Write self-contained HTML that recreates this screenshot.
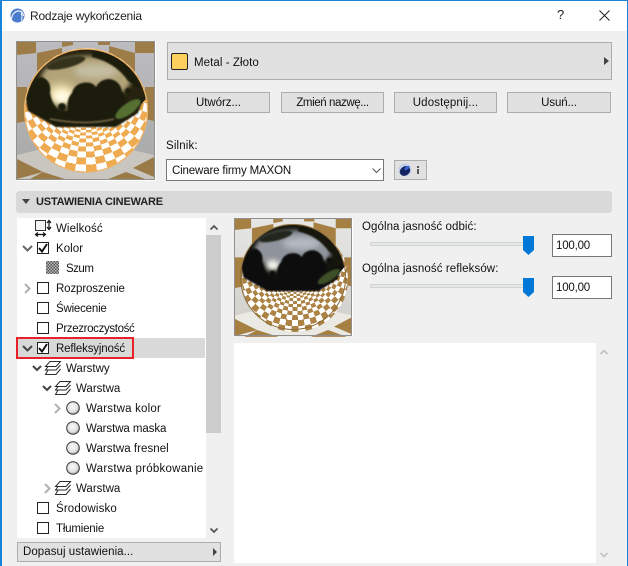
<!DOCTYPE html>
<html lang="pl"><head><meta charset="utf-8"><title>Rodzaje wykończenia</title>
<style>
html,body{margin:0;padding:0}
body{width:628px;height:566px;overflow:hidden;position:relative;background:#f0f0f0;font:11.5px "Liberation Sans",sans-serif;color:#111}
.a,.t,.b{position:absolute}
.t{line-height:20px;white-space:nowrap;margin-top:1px}
.b{box-sizing:border-box;background:#e1e1e1;border:1px solid #adadad;text-align:center;line-height:20px;white-space:nowrap}
.cb{position:absolute;box-sizing:border-box;width:12px;height:12px;border:1px solid #222;background:#fff;left:37px}
svg{position:absolute;overflow:visible}
.floor{position:absolute;overflow:hidden;border-radius:50%;isolation:isolate;clip-path:circle(50%)}
.floor div{position:absolute;inset:0}
</style></head><body>
<svg width="0" height="0" style="position:absolute"><defs>
<symbol id="stack" viewBox="0 0 16 14" overflow="visible"><g fill="none" stroke="#2b2b2b" stroke-width="1"><path d="M5 .5H15.500L11 5.500H.5Z"/><path d="M3 5.500L.5 9H11L15.500 4"/><path d="M3 9L.5 13.500H11L15.500 8"/></g></symbol>
<radialGradient id="ballg" cx=".45" cy=".4" r=".7"><stop offset="0" stop-color="#fafafa"/><stop offset=".6" stop-color="#e0e0e0"/><stop offset=".85" stop-color="#9a9a9a"/><stop offset="1" stop-color="#666"/></radialGradient>
<symbol id="ball" viewBox="0 0 14 14" overflow="visible"><circle cx="7" cy="7" r="6.300" fill="url(#ballg)" stroke="#333" stroke-width="1"/></symbol>
<filter id="f05" x="-30%" y="-30%" width="160%" height="160%"><feGaussianBlur stdDeviation=".8"/></filter>
<filter id="f2" x="-50%" y="-50%" width="200%" height="200%"><feGaussianBlur stdDeviation="2.500"/></filter>
<filter id="f3" x="-50%" y="-50%" width="200%" height="200%"><feGaussianBlur stdDeviation="3"/></filter>
<filter id="f5" x="-80%" y="-80%" width="260%" height="260%"><feGaussianBlur stdDeviation="5"/></filter>
<clipPath id="up1"><circle cx="70" cy="69.500" r="61.500"/></clipPath>
<linearGradient id="wall1" x1="0" x2="0" y1="0" y2="1"><stop offset="0" stop-color="#bcbcbf"/><stop offset="1" stop-color="#a8a7a7"/></linearGradient>
<linearGradient id="wall2" x1="0" x2="0" y1="0" y2="1"><stop offset="0" stop-color="#e6e6e4"/><stop offset="1" stop-color="#cfcec9"/></linearGradient>
<symbol id="tree" viewBox="0 0 139 139" overflow="visible"><g filter="url(#f05)">
<path d="M10 60Q14 38 26 36Q36 40 34 52Q36 64 44 70L100 70Q108 62 114 60L128 56L122 72L100 86H40L12 70Z"/>
<path d="M52 70Q50 58 56 52Q58 44 66 42Q76 40 80 46Q84 38 94 38Q104 40 106 50Q112 56 108 72Z"/>
<circle cx="46" cy="66" r="4"/><circle cx="112" cy="50" r="3"/>
</g></symbol>
</defs></svg>

<!-- window chrome -->
<div class="a" style="left:0;top:0;width:628px;height:31px;background:#fff"></div>
<div class="a" style="left:0;top:0;width:628px;height:1px;background:#1883d7"></div>
<div class="a" style="left:0;top:0;width:2px;height:566px;background:#1883d7"></div>
<div class="a" style="left:627px;top:0;width:1px;height:566px;background:#1883d7"></div>
<svg style="left:10px;top:8px" width="15" height="15" viewBox="0 0 15 15"><circle cx="7.500" cy="7.500" r="7" fill="#4a7ccb"/><path d="M1.500 11C2 6 5 3 9 3c2.500 0 4 2 4.500 5" fill="none" stroke="#f2f5fc" stroke-width="1.200"/><path d="M11 5c1.200 2 1.200 5 .3 7.500" fill="none" stroke="#fff" stroke-width="1"/></svg>
<div class="t" style="left:30px;top:5px;font-size:12px;letter-spacing:-.22px;color:#222">Rodzaje wykończenia</div>
<div class="t" style="left:557px;top:4px;font-size:13px;color:#222">?</div>
<svg style="left:599px;top:10px" width="11" height="11" viewBox="0 0 11 11"><path d="M.5 .5L10.500 10.500M10.500 .5L.5 10.500" stroke="#222" stroke-width="1" fill="none"/></svg>

<!-- big preview -->
<div class="a" style="left:16px;top:41px;width:140px;height:140px;background:#fff"></div>
<svg style="left:16px;top:41px" width="139" height="139" viewBox="0 0 139 139">
<rect width="139" height="139" fill="url(#wall1)"/>
<g fill="#9d7c47"><path d="M1 1H20V12L1 14Z"/><path d="M21 12L46 7V25L21 31Z"/><path d="M46 1H57V4L46 6Z"/><path d="M82 1H94V4H82Z"/><path d="M93 5L119 12V33L93 25Z"/><path d="M119 1H138V12H119Z"/><path d="M1 46L11 46V80L1 82Z"/><path d="M129 46L138 46V80L129 78Z"/></g>
<path d="M1 114L34 106H104L138 114V139H1Z" fill="#c9c6c0"/>
<g fill="#9a7b48"><path d="M1 118L27 131L1 138Z"/><path d="M27 131L52 139H12Z"/><path d="M138 116L117 127L138 136Z"/><path d="M110 131L90 139H132Z"/></g>
<rect x=".5" y=".5" width="138" height="138" fill="none" stroke="#8f8f8f"/>
</svg>
<div class="floor" style="left:24px;top:48px;width:124px;height:124px;background:repeating-conic-gradient(from 4deg at 50% 36%,#000 0 8deg,#fff 8deg 16deg)">
<div style="background:radial-gradient(circle at 50% 36%,#000 0 33px,#fff 33px 35px,#000 35px 37.500px,#fff 37.500px 40px,#000 40px 43px,#fff 43px 46px,#000 46px 50px,#fff 50px 54px,#000 54px 59px,#fff 59px 65px,#000 65px 72px,#fff 72px 80px,#000 80px 90px);mix-blend-mode:difference"></div>
<div style="background:#efab52;mix-blend-mode:screen"></div>
</div>
<svg style="left:16px;top:41px" width="139" height="139" viewBox="0 0 139 139">
<g clip-path="url(#up1)">
<ellipse cx="70" cy="30" rx="70" ry="54" fill="#272310"/>
<ellipse cx="70" cy="38" rx="45" ry="23" fill="#b2a379" filter="url(#f2)"/>
<ellipse cx="80" cy="30" rx="22" ry="7" fill="#c4bda2" filter="url(#f3)"/>
<ellipse cx="45" cy="55" rx="15" ry="11" fill="#fff0bb" filter="url(#f5)"/>
<ellipse cx="46" cy="56" rx="8" ry="6" fill="#fffbe6" filter="url(#f3)"/>
<ellipse cx="50" cy="22" rx="20" ry="5" transform="rotate(-14 50 22)" fill="#34331c" filter="url(#f05)"/>
<path d="M76 9Q115 12 125 48L112 40Q100 22 76 16Z" fill="#1f1d0d" filter="url(#f05)"/>
<use href="#tree" width="139" height="139" fill="#1d1e0e"/>
<ellipse cx="112" cy="68" rx="15" ry="5.500" transform="rotate(-36 112 68)" fill="#566f30" filter="url(#f05)"/>
<path d="M34 78Q70 85 98 78" fill="none" stroke="#7a6c48" stroke-width="1.600" filter="url(#f05)"/>
</g>
<circle cx="70" cy="69.500" r="61.500" fill="none" stroke="#efb163" stroke-width="1.200"/>
</svg>

<!-- material selector -->
<div class="b" style="left:167px;top:42px;width:445px;height:38px"></div>
<div class="a" style="left:171px;top:53px;width:17px;height:17px;box-sizing:border-box;background:#fdd05e;border:1px solid #222;border-radius:2px"></div>
<div class="t" style="left:194px;top:52px;letter-spacing:.07px">Metal - Złoto</div>
<div class="a" style="left:604px;top:57px;border-left:5px solid #444;border-top:4px solid transparent;border-bottom:4px solid transparent"></div>
<div class="b" style="left:167px;top:92px;width:103px;height:21px;line-height:21px;letter-spacing:-.05px">Utwórz...</div>
<div class="b" style="left:281px;top:92px;width:103px;height:21px;line-height:21px;letter-spacing:-.4px">Zmień nazwę...</div>
<div class="b" style="left:394px;top:92px;width:103px;height:21px;line-height:21px;letter-spacing:.12px">Udostępnij...</div>
<div class="b" style="left:507px;top:92px;width:104px;height:21px;line-height:21px;letter-spacing:-.1px">Usuń...</div>
<div class="t" style="left:166px;top:135px;letter-spacing:.15px">Silnik:</div>
<div class="a" style="left:166px;top:159px;width:218px;height:22px;box-sizing:border-box;background:#fff;border:1px solid #777"></div>
<div class="t" style="left:172px;top:160px;letter-spacing:-.15px">Cineware firmy MAXON</div>
<svg style="left:372px;top:168px" width="9" height="5" viewBox="0 0 9 5"><path d="M.5 .5L4.500 4.500L8.500 .5" fill="none" stroke="#555"/></svg>
<div class="b" style="left:394px;top:160px;width:33px;height:20px"></div>
<svg style="left:398px;top:163px" width="15" height="14" viewBox="0 0 15 14"><circle cx="7" cy="7" r="6.500" fill="#c4cfec"/><ellipse cx="7" cy="8" rx="5.500" ry="4.500" transform="rotate(-35 7 8)" fill="#14245e"/><ellipse cx="9" cy="5" rx="3" ry="1.500" transform="rotate(-35 9 5)" fill="#3a62d0"/></svg>
<div class="a" style="left:417px;top:166px;width:2px;height:2px;background:#555"></div>
<div class="a" style="left:417px;top:169px;width:2px;height:5px;background:#555"></div>

<!-- section header -->
<div class="a" style="left:16px;top:191px;width:596px;height:22px;background:#d9d9d9;border-radius:3px"></div>
<div class="a" style="left:22px;top:199px;border-top:5px solid #444;border-left:4px solid transparent;border-right:4px solid transparent"></div>
<div class="t" style="left:36px;top:191px;font-weight:bold;font-size:11px;letter-spacing:-.17px;color:#222">USTAWIENIA CINEWARE</div>

<!-- tree -->
<div class="a" style="left:17px;top:218px;width:189px;height:320px;background:#fff"></div>
<div class="a" style="left:206px;top:235px;width:15px;height:198px;background:#cdcdcd"></div>
<svg style="left:210px;top:225px" width="8" height="5" viewBox="0 0 8 5"><path d="M.5 4.500L4 1L7.500 4.500" fill="none" stroke="#555" stroke-width="1.700"/></svg>
<svg style="left:210px;top:528px" width="8" height="5" viewBox="0 0 8 5"><path d="M.5 .5L4 4L7.500 .5" fill="none" stroke="#555" stroke-width="1.700"/></svg>
<div class="a" style="left:17px;top:338px;width:188px;height:20px;background:#d9d9d9"></div>

<svg style="left:35px;top:220px" width="17" height="17" viewBox="0 0 17 17"><rect x=".5" y=".5" width="10" height="10" fill="#f4f4f4" stroke="#333" stroke-width="1"/><path d="M14 1V9M12 3L14 .5L16 3M12 7L14 9.500L16 7" fill="none" stroke="#111" stroke-width="1.200"/><path d="M1 14.500H10M3 12.500L.5 14.500L3 16.500M8 12.500L10.500 14.500L8 16.500" fill="none" stroke="#111" stroke-width="1.200"/></svg>
<div class="t" style="left:56px;top:218px;letter-spacing:.08px">Wielkość</div>

<svg style="left:22px;top:245px" width="11" height="7" viewBox="0 0 11 7"><path d="M1 1L5.500 5.500L10 1" fill="none" stroke="#666" stroke-width="2"/></svg>
<div class="cb" style="top:242px"></div>
<svg style="left:38px;top:243px" width="10" height="10" viewBox="0 0 10 10"><path d="M1 5L4 8.500L9 1" fill="none" stroke="#111" stroke-width="1.900"/></svg>
<div class="t" style="left:56px;top:238px;letter-spacing:.05px">Kolor</div>

<div class="a" style="left:46px;top:261px;width:13px;height:13px;background:repeating-conic-gradient(#555 0 25%,#bbb 25% 50%) 0 0/3px 3px"></div>
<div class="t" style="left:66px;top:258px;letter-spacing:-.5px">Szum</div>

<svg style="left:24px;top:283px" width="7" height="11" viewBox="0 0 7 11"><path d="M1 1L5.500 5.500L1 10" fill="none" stroke="#b0b0b0" stroke-width="2"/></svg>
<div class="cb" style="top:282px"></div>
<div class="t" style="left:56px;top:278px;letter-spacing:-.13px">Rozproszenie</div>
<div class="cb" style="top:302px"></div>
<div class="t" style="left:56px;top:298px;letter-spacing:-.2px">Świecenie</div>
<div class="cb" style="top:322px"></div>
<div class="t" style="left:56px;top:318px;letter-spacing:-.35px">Przezroczystość</div>

<svg style="left:22px;top:345px" width="11" height="7" viewBox="0 0 11 7"><path d="M1 1L5.500 5.500L10 1" fill="none" stroke="#444" stroke-width="2"/></svg>
<div class="cb" style="top:342px"></div>
<svg style="left:38px;top:343px" width="10" height="10" viewBox="0 0 10 10"><path d="M1 5L4 8.500L9 1" fill="none" stroke="#111" stroke-width="1.900"/></svg>
<div class="t" style="left:56px;top:338px;letter-spacing:-.15px">Refleksyjność</div>
<div class="a" style="left:16px;top:337px;width:118px;height:22px;box-sizing:border-box;border:2px solid #e8202a"></div>

<svg style="left:32px;top:365px" width="10" height="7" viewBox="0 0 10 7"><path d="M1 1L5 5L9 1" fill="none" stroke="#444" stroke-width="2"/></svg>
<svg style="left:45px;top:361px" width="16" height="14"><use href="#stack"/></svg>
<div class="t" style="left:66px;top:358px">Warstwy</div>

<svg style="left:42px;top:385px" width="10" height="7" viewBox="0 0 10 7"><path d="M1 1L5 5L9 1" fill="none" stroke="#444" stroke-width="2"/></svg>
<svg style="left:55px;top:381px" width="16" height="14"><use href="#stack"/></svg>
<div class="t" style="left:76px;top:378px">Warstwa</div>

<svg style="left:54px;top:403px" width="7" height="11" viewBox="0 0 7 11"><path d="M1 1L5.500 5.500L1 10" fill="none" stroke="#b0b0b0" stroke-width="2"/></svg>
<svg style="left:66px;top:401px" width="14" height="14"><use href="#ball"/></svg>
<div class="t" style="left:86px;top:398px;letter-spacing:.2px">Warstwa kolor</div>
<svg style="left:66px;top:421px" width="14" height="14"><use href="#ball"/></svg>
<div class="t" style="left:86px;top:418px;letter-spacing:-.08px">Warstwa maska</div>
<svg style="left:66px;top:441px" width="14" height="14"><use href="#ball"/></svg>
<div class="t" style="left:86px;top:438px;letter-spacing:.05px">Warstwa fresnel</div>
<svg style="left:66px;top:461px" width="14" height="14"><use href="#ball"/></svg>
<div class="t" style="left:86px;top:458px;letter-spacing:.25px">Warstwa próbkowanie</div>

<svg style="left:44px;top:483px" width="7" height="11" viewBox="0 0 7 11"><path d="M1 1L5.500 5.500L1 10" fill="none" stroke="#b0b0b0" stroke-width="2"/></svg>
<svg style="left:55px;top:481px" width="16" height="14"><use href="#stack"/></svg>
<div class="t" style="left:76px;top:478px">Warstwa</div>

<div class="cb" style="top:502px"></div>
<div class="t" style="left:56px;top:498px;letter-spacing:.15px">Środowisko</div>
<div class="cb" style="top:522px"></div>
<div class="t" style="left:56px;top:518px;letter-spacing:-.2px">Tłumienie</div>

<div class="b" style="left:17px;top:542px;width:204px;height:20px;text-align:left;padding-left:5px;line-height:19px;letter-spacing:.05px">Dopasuj ustawienia...</div>
<div class="a" style="left:213px;top:548px;border-left:4px solid #444;border-top:4px solid transparent;border-bottom:4px solid transparent"></div>

<!-- small preview -->
<div class="a" style="left:234px;top:218px;width:119px;height:119px;background:#fff"></div>
<svg style="left:234px;top:218px" width="118" height="118" viewBox="0 0 118 118">
<rect width="118" height="118" fill="url(#wall2)"/>
<g transform="scale(.855)" fill="#a67f43"><path d="M1 1H20V12L1 14Z"/><path d="M21 12L46 7V25L21 31Z"/><path d="M46 1H57V4L46 6Z"/><path d="M82 1H94V4H82Z"/><path d="M93 5L119 12V33L93 25Z"/><path d="M119 1H138V12H119Z"/><path d="M1 46L11 46V80L1 82Z"/><path d="M129 46L138 46V80L129 78Z"/></g>
<g transform="scale(.855)"><path d="M1 114L34 106H104L138 114V139H1Z" fill="#ebe9e3"/>
<g fill="#a67f43"><path d="M1 118L27 131L1 138Z"/><path d="M27 131L52 139H12Z"/><path d="M138 116L117 127L138 136Z"/><path d="M110 131L90 139H132Z"/></g></g>
<rect x=".5" y=".5" width="117" height="117" fill="none" stroke="#8f8f8f"/>
</svg>
<div class="floor" style="left:242px;top:226px;width:106px;height:106px;background:repeating-conic-gradient(from 3deg at 50% 36%,#000 0 6deg,#fff 6deg 12deg)">
<div style="background:radial-gradient(circle at 50% 36%,#000 0 28px,#fff 28px 30px,#000 30px 32px,#fff 32px 34px,#000 34px 37px,#fff 37px 40px,#000 40px 43px,#fff 43px 47px,#000 47px 51px,#fff 51px 56px,#000 56px 62px,#fff 62px 69px,#000 69px 80px);mix-blend-mode:difference"></div>
<div style="background:#ac8344;mix-blend-mode:screen"></div>
</div>
<svg style="left:234px;top:218px" width="118" height="118" viewBox="0 0 118 118">
<g transform="translate(-.8 -.4) scale(.855)">
<g clip-path="url(#up1)">
<ellipse cx="70" cy="30" rx="70" ry="54" fill="#15160e"/>
<ellipse cx="70" cy="38" rx="45" ry="23" fill="#8f949c" filter="url(#f2)"/>
<ellipse cx="80" cy="30" rx="22" ry="7" fill="#b5b9c0" filter="url(#f3)"/>
<ellipse cx="46" cy="56" rx="8" ry="6" fill="#fafaf0" filter="url(#f3)"/>
<ellipse cx="50" cy="22" rx="20" ry="5" transform="rotate(-14 50 22)" fill="#23261b" filter="url(#f05)"/>
<path d="M76 9Q115 12 125 48L112 40Q100 22 76 16Z" fill="#12130b" filter="url(#f05)"/>
<use href="#tree" width="139" height="139" fill="#0f100a"/>
<ellipse cx="112" cy="69" rx="15" ry="5" transform="rotate(-32 112 69)" fill="#3c5026" filter="url(#f05)"/>
</g>
<circle cx="70" cy="69.500" r="61.500" fill="none" stroke="#8d6e3c" stroke-width="1.200"/>
</g></svg>

<!-- sliders -->
<div class="t" style="left:362px;top:216px;letter-spacing:.07px">Ogólna jasność odbić:</div>
<div class="a" style="left:370px;top:242px;width:160px;height:4px;box-sizing:border-box;background:#e6e9e8;border:1px solid #cfd4d2"></div>
<svg style="left:523px;top:236px" width="11" height="19" viewBox="0 0 11 19"><path d="M0 0H11V14L5.500 19L0 14Z" fill="#0078d7"/></svg>
<div class="a" style="left:552px;top:234px;width:60px;height:23px;box-sizing:border-box;background:#fff;border:1px solid #777"></div>
<div class="t" style="left:556px;top:235px;font-size:11.500px;letter-spacing:-.2px">100,00</div>

<div class="t" style="left:362px;top:258px;letter-spacing:.09px">Ogólna jasność refleksów:</div>
<div class="a" style="left:370px;top:284px;width:160px;height:4px;box-sizing:border-box;background:#e6e9e8;border:1px solid #cfd4d2"></div>
<svg style="left:523px;top:278px" width="11" height="19" viewBox="0 0 11 19"><path d="M0 0H11V14L5.500 19L0 14Z" fill="#0078d7"/></svg>
<div class="a" style="left:552px;top:276px;width:60px;height:23px;box-sizing:border-box;background:#fff;border:1px solid #777"></div>
<div class="t" style="left:556px;top:277px;font-size:11.500px;letter-spacing:-.2px">100,00</div>

<!-- white pane -->
<div class="a" style="left:234px;top:343px;width:362px;height:220px;background:#fff"></div>
<svg style="left:600px;top:349px" width="8" height="6" viewBox="0 0 8 6"><path d="M.5 5L4 1.500L7.500 5" fill="none" stroke="#c4c4c4" stroke-width="1.700"/></svg>
<svg style="left:600px;top:552px" width="8" height="6" viewBox="0 0 8 6"><path d="M.5 1L4 4.500L7.500 1" fill="none" stroke="#c4c4c4" stroke-width="1.700"/></svg>
</body></html>
